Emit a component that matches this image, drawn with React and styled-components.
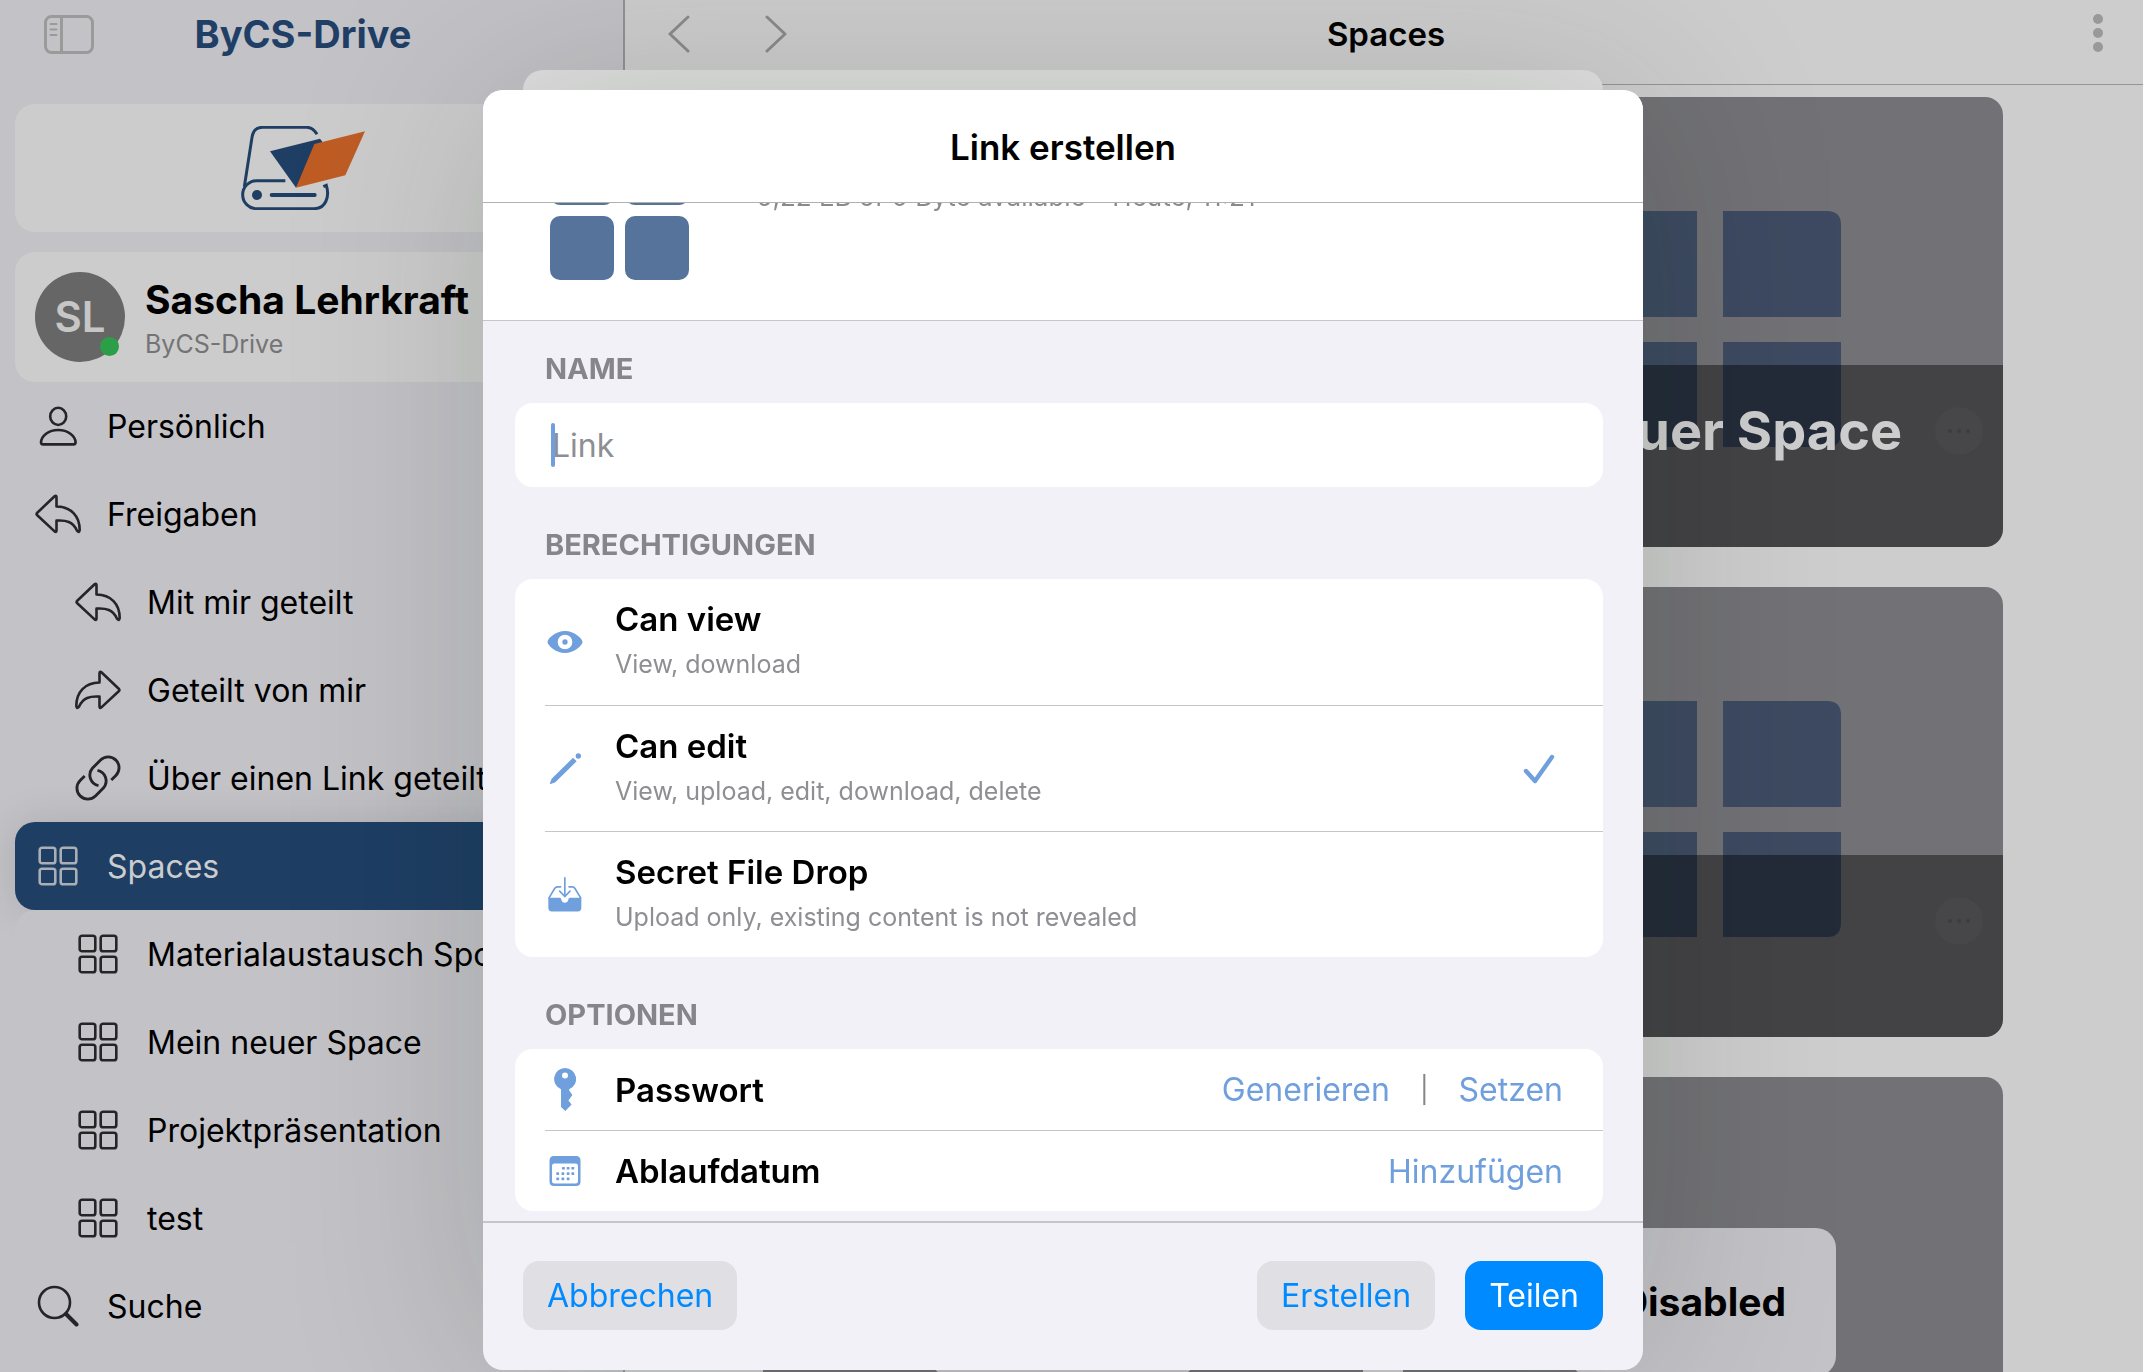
import React, { useState } from 'react';
import styled, { createGlobalStyle, css } from 'styled-components';

const GlobalStyle = createGlobalStyle`
  * {
    box-sizing: border-box;
  }

  body {
    margin: 0;
    overflow: hidden;
    background: #cdcdcd;
    color: #000;
    font-family: Inter, "Liberation Sans", sans-serif;
    font-size: 32px;
  }

  button, input {
    font: inherit;
  }

  button {
    border: 0;
    padding: 0;
    background: none;
    cursor: pointer;
  }
`;

const Page = styled.div`
  display: flex;
  height: 100vh;
  overflow: hidden;
`;

/* ---------- sidebar ---------- */

const Sidebar = styled.aside`
  flex: 0 0 625px;
  padding: 0 32px 0 15px;
  border-right: 2px solid #929393;
  background: #c3c2c7;
`;

const SidebarHeader = styled.header`
  display: grid;
  grid-template-columns: 50px 1fr 50px;
  align-items: center;
  height: 68px;
  margin: 0 29px 36px;
  color: #999a9a;
`;

const SidebarTitle = styled.h2`
  margin: 0;
  text-align: center;
  font-size: 38px;
  font-weight: 700;
  color: #1f3f66;
`;

const SidebarCard = styled.div`
  display: flex;
  align-items: center;
  border-radius: 20px;
  background: #cccccc;
`;

const LogoCard = styled(SidebarCard)`
  justify-content: center;
  height: 128px;
  margin-bottom: 20px;
`;

const AccountCard = styled(SidebarCard)`
  gap: 20px;
  height: 130px;
  padding: 0 20px;
`;

const Avatar = styled.div`
  position: relative;
  flex: none;
  width: 90px;
  height: 90px;
  border-radius: 50%;
  background: #666;
  color: #c6c6c6;
  font-size: 42px;
  font-weight: 600;
  line-height: 90px;
  text-align: center;
`;

const OnlineDot = styled.span`
  position: absolute;
  right: 6px;
  bottom: 6px;
  width: 19px;
  height: 19px;
  border-radius: 50%;
  background: #2b9f47;
`;

const AccountText = styled.div`
  padding-top: 2px;
`;

const AccountName = styled.div`
  font-size: 39px;
  font-weight: 700;
  line-height: 52px;
  white-space: nowrap;
`;

const AccountHost = styled.div`
  font-size: 25px;
  line-height: 36px;
  color: #747476;
`;

const NavItem = styled.a`
  display: flex;
  align-items: center;
  gap: 24px;
  height: 88px;
  padding-left: ${(props) => (props.$nested ? 58 : 18)}px;
  border-radius: 20px;
  background: #c3c2c7;
  color: #000;
  text-decoration: none;
  white-space: nowrap;

  svg {
    color: #252527;
  }

  ${(props) => props.$active && css`
    background: #1e3e64;
    box-shadow: 0 0 40px rgba(0, 0, 0, 0.12);
    color: #cbccce;

    svg {
      color: #a9afb5;
    }
  `}
`;

const NavIcon = styled.span`
  display: flex;
  justify-content: center;
  flex: 0 0 50px;
`;

/* ---------- main area ---------- */

const Main = styled.main`
  flex: 1;
  min-width: 0;
`;

const Toolbar = styled.header`
  display: grid;
  grid-template-columns: 1fr auto 1fr;
  align-items: start;
  height: 85px;
  padding: 0 39px 0 43px;
  border-bottom: 1px solid #959595;
`;

const ToolbarGroup = styled.div`
  display: flex;
  align-items: center;
  justify-content: ${(props) => (props.$end ? 'flex-end' : 'flex-start')};
  gap: 75px;
  height: 68px;
`;

const IconButton = styled.button`
  display: flex;
  color: ${(props) => props.$color || '#8a8c89'};
`;

const ToolbarTitle = styled.h1`
  margin: 0;
  font-size: 33px;
  font-weight: 600;
  line-height: 68px;
`;

const SpaceGrid = styled.div`
  display: grid;
  grid-template-columns: 1fr 1fr;
  gap: 40px;
  padding: 12px 140px 0 138px;
`;

const SpaceCard = styled.article`
  position: relative;
  display: flex;
  align-items: center;
  justify-content: center;
  height: 450px;
  border-radius: 18px;
  overflow: hidden;
  background: #727176;
`;

const SpaceArt = styled.svg`
  margin: 14px 0 0 14px;
`;

const SpaceCaption = styled.div`
  position: absolute;
  inset: auto 0 0 0;
  display: flex;
  align-items: flex-start;
  justify-content: space-between;
  height: 182px;
  padding: 31px 20px 31px 24px;
  background: rgba(0, 0, 0, 0.41);
`;

const SpaceName = styled.h3`
  margin: 0;
  color: #cdcdcd;
  font-size: 54px;
  font-weight: 700;
  line-height: 70px;
  white-space: nowrap;
`;

const MoreButton = styled.button`
  display: flex;
  align-items: center;
  justify-content: center;
  width: 48px;
  height: 48px;
  margin-top: 11px;
  border-radius: 50%;
  background: #474749;
  color: #3d3d3f;
`;

const DisabledBadge = styled.div`
  position: absolute;
  padding: 50px;
  border-radius: 20px;
  background: #c3c2c7;
  font-size: 39px;
  font-weight: 700;
  line-height: 48px;
`;

/* ---------- dialog ---------- */

const Overlay = styled.div`
  position: fixed;
  inset: 0;
  display: flex;
  flex-direction: column;
  align-items: center;
  padding: 70px 17px 2px 0;
`;

const BackSheet = styled.div`
  flex: none;
  width: calc(100% - 80px);
  max-width: 1080px;
  height: 20px;
  border-radius: 20px 20px 0 0;
  background: #e0e0e0;
`;

const Dialog = styled.section`
  display: flex;
  flex: 1;
  flex-direction: column;
  width: 100%;
  max-width: 1160px;
  min-height: 0;
  border-radius: 20px;
  overflow: hidden;
  background: #f2f1f7;
  box-shadow: 0 0 200px rgba(10, 30, 0, 0.17);
`;

const DialogHeader = styled.header`
  flex: none;
  padding: 33px 0 31px;
  border-bottom: 1px solid #b1b1b3;
  background: #fff;
`;

const DialogTitle = styled.h2`
  margin: 0;
  text-align: center;
  font-size: 35px;
  font-weight: 600;
  line-height: 48px;
`;

const DialogBody = styled.div`
  flex: 1;
  min-height: 0;
  overflow: hidden;
`;

/* the item summary is scrolled halfway under the header */
const ItemSummary = styled.div`
  display: flex;
  align-items: flex-end;
  height: 118px;
  padding: 0 67px 40px;
  overflow: hidden;
  border-bottom: 1px solid #c6c6c9;
  background: #fff;
`;

const ItemRow = styled.div`
  display: flex;
  align-items: flex-start;
  gap: 68px;
`;

const ItemMeta = styled.div`
  padding-top: 40px;
  color: #8a8a8e;
  font-size: 26px;
  line-height: 32px;
`;

const Group = styled.fieldset`
  min-width: 0;
  margin: 0 40px 0 32px;
  padding: 0;
  border: 0;
`;

const GroupLabel = styled.legend`
  display: block;
  padding: ${(props) => (props.$first ? 30 : 40)}px 0 16px 30px;
  color: #86858b;
  font-size: 29px;
  font-weight: 700;
  line-height: 36px;
  text-transform: uppercase;
`;

const GroupCard = styled.div`
  border-radius: 18px;
  overflow: hidden;
  background: #fff;
`;

const NameInput = styled.input`
  display: block;
  width: 100%;
  height: 84px;
  padding: 0 37px;
  border: 0;
  outline: 0;
  border-radius: 18px;
  background: #fff;
  caret-color: transparent;

  &::placeholder {
    color: #8e8e93;
    opacity: 1;
  }
`;

const NameField = styled.div`
  position: relative;
`;

const Caret = styled.span`
  position: absolute;
  top: 20px;
  left: 36px;
  width: 4px;
  height: 44px;
  border-radius: 2px;
  background: #6f9fdc;
`;

const rowStyle = css`
  display: flex;
  align-items: center;
  gap: 30px;
  margin-left: 30px;
  padding-right: 40px;

  & + & {
    border-top: 1px solid #c6c6c8;
  }
`;

const PermissionRow = styled.label`
  ${rowStyle}
  height: 126px;
  cursor: pointer;
`;

const OptionRow = styled.div`
  ${rowStyle}
  height: 81px;
`;

const RowIcon = styled.span`
  display: flex;
  justify-content: center;
  flex: 0 0 40px;
  color: #6f9fdc;
`;

const HiddenRadio = styled.input`
  position: absolute;
  opacity: 0;
`;

const RowText = styled.span`
  display: flex;
  flex: 1;
  flex-direction: column;
  padding-bottom: 2px;
`;

const RowTitle = styled.span`
  flex: 1;
  font-size: 33px;
  font-weight: 600;
  line-height: 46px;
`;

const RowHint = styled.span`
  color: #8e8e93;
  font-size: 25px;
  line-height: 44px;
`;

const CheckMark = styled.span`
  display: flex;
  padding-right: 8px;
  color: #6f9fdc;
`;

const Actions = styled.div`
  display: flex;
  align-items: center;
  gap: 30px;
`;

const Divider = styled.span`
  color: #85858a;
  font-size: 26px;
`;

const LinkButton = styled.button`
  color: #6f9fdc;
`;

const DialogFooter = styled.footer`
  display: flex;
  flex: none;
  gap: 30px;
  padding: 38px 40px 40px;
  border-top: 2px solid #c6c6ca;
`;

const FooterButton = styled.button`
  height: 69px;
  padding: 0 24px;
  border-radius: 16px;
  background: ${(props) => (props.$primary ? '#008aff' : '#dfdfe4')};
  color: ${(props) => (props.$primary ? '#fff' : '#008aff')};

  &:first-child {
    margin-right: auto;
  }
`;

/* ---------- icons ---------- */

function GridIcon() {
  return (
    <svg width="40" height="40" viewBox="0 0 40 40" fill="none" stroke="currentColor" strokeWidth="2.6">
      <rect x="1.7" y="1.7" width="15.6" height="15.6" rx="2.4" />
      <rect x="22.7" y="1.7" width="15.6" height="15.6" rx="2.4" />
      <rect x="1.7" y="22.7" width="15.6" height="15.6" rx="2.4" />
      <rect x="22.7" y="22.7" width="15.6" height="15.6" rx="2.4" />
    </svg>
  );
}

function PersonIcon() {
  return (
    <svg width="38" height="40" viewBox="0 0 38 40" fill="none" stroke="currentColor" strokeWidth="2.6">
      <ellipse cx="19.2" cy="10.4" rx="8" ry="8.6" />
      <path d="M4 38.4 H34.6 Q36.6 38.4 36.6 36.3 C36.2 29.8 29 24 19.2 24 C9.4 24 2.4 29.8 2 36.3 Q2 38.4 4 38.4 Z" />
    </svg>
  );
}

function ShareArrowIcon({ flipped }) {
  return (
    <svg width="46" height="40" viewBox="0 0 46 40" fill="none" stroke="currentColor" strokeWidth="2.6" strokeLinejoin="round">
      <path
        transform={flipped ? 'translate(46 0) scale(-1 1)' : undefined}
        d="M19.6 2.3 L2 19 Q1.2 20 2 21 L19.6 37.4 Q21.5 38.6 21.5 36.4 V26.6 C31 26 38 27.4 42 36.7 Q44.4 39.4 44.7 36 C44.7 22 36 12.8 21.5 12.5 V3.4 Q21.5 1 19.6 2.3 Z"
      />
    </svg>
  );
}

function LinkIcon() {
  return (
    <svg width="46" height="46" viewBox="0 0 45 45" fill="none" stroke="currentColor" strokeWidth="2.8">
      <path d="M35.5 24.5 L40 20 A10.5 10.5 0 0 0 25 5 L17 13 A10.5 10.5 0 0 0 23 30" />
      <path d="M9.5 20.5 L5 25 A10.5 10.5 0 0 0 20 40 L28 32 A10.5 10.5 0 0 0 22 15" />
    </svg>
  );
}

function SearchIcon() {
  return (
    <svg width="42" height="42" viewBox="0 0 42 42" fill="none" stroke="currentColor" strokeLinecap="round">
      <circle cx="17.5" cy="17.5" r="15.5" strokeWidth="2.6" />
      <path d="M29 29 L39.5 39.5" strokeWidth="4" />
    </svg>
  );
}

function SidebarIcon() {
  return (
    <svg width="50" height="40" viewBox="0 0 50 40" fill="none" stroke="currentColor" strokeWidth="3">
      <rect x="1.5" y="2.5" width="47" height="36" rx="6" />
      <path d="M17.5 3 V38" />
      <path d="M6.5 10 H12.5 M6.5 15.5 H12.5 M6.5 21 H12.5" strokeWidth="2" strokeLinecap="round" />
    </svg>
  );
}

function ChevronIcon({ right }) {
  return (
    <svg width="22" height="38" viewBox="0 0 22 38" fill="none" stroke="currentColor" strokeWidth="3" strokeLinecap="round" strokeLinejoin="round">
      <path d={right ? 'M2 2 L20 19 L2 36' : 'M20 2 L2 19 L20 36'} />
    </svg>
  );
}

function DriveLogo() {
  return (
    <svg width="124" height="84" viewBox="723 378 372 252" fill="none" stroke="#1e3e64" strokeWidth="9">
      <path d="M951 403 Q938 382 920 382 H788 Q760 382 756 412 L733 560" />
      <path d="M856 542 H770 A42 42 0 0 0 770 626 H942 C976 626 990 592 979 556 L970 560" />
      <path d="M815 585 H944" strokeWidth="12" strokeLinecap="round" />
      <circle cx="771" cy="585" r="15" fill="#1e3e64" stroke="none" />
      <path d="M810 454 L960 416 L967 425 L888 563 Z" fill="#1e3e64" stroke="none" />
      <path d="M943 432 L1095 394 L1036 526 L888 563 Z" fill="#be5c24" stroke="none" />
    </svg>
  );
}

function EyeIcon() {
  return (
    <svg width="36" height="22" viewBox="144 93 105 66" fill="currentColor">
      <path fillRule="evenodd" d="M196.5 93 C224 93 249 116 249 126 C249 136 224 159 196.5 159 C169 159 144 136 144 126 C144 116 169 93 196.5 93 Z M196.5 104 A22 22 0 1 0 196.5 148 A22 22 0 1 0 196.5 104 Z" />
      <circle cx="196.5" cy="126" r="8" />
    </svg>
  );
}

function PencilIcon() {
  return (
    <svg width="31" height="31" viewBox="147 456 93 93" fill="currentColor">
      <path d="M216 470 L227 481 L163 544 L149 549 Q146 549 147 546 L152 533 Z" />
      <circle cx="232" cy="465" r="8" />
    </svg>
  );
}

function TrayIcon() {
  return (
    <svg width="34" height="35" viewBox="146 826 102 104" fill="none" stroke="currentColor" strokeWidth="5" strokeLinecap="round">
      <path d="M196.5 828 V882 M181 868 L196.5 884 L212 868" />
      <path d="M184 855 H174 Q169 855 166 860 L149 888 M209 855 H219 Q224 855 227 860 L244 888" />
      <path d="M147 888 H181 Q185 888 186 893 Q188 903 196.5 903 Q205 903 207 893 Q208 888 212 888 H246 V918 Q246 929 235 929 H158 Q147 929 147 918 Z" fill="currentColor" stroke="none" />
    </svg>
  );
}

function KeyIcon() {
  return (
    <svg width="22" height="43" viewBox="0 0 22 43" fill="currentColor">
      <path fillRule="evenodd" d="M11 0 A11 11 0 0 1 15.2 21.2 V22.4 L18.4 27 L14.4 32.5 L17.6 36.5 L11.3 43 L7 39 V21.2 A11 11 0 0 1 11 0 Z M11 4.6 A3 3 0 1 0 11 10.6 A3 3 0 1 0 11 4.6 Z" />
    </svg>
  );
}

function CalendarIcon() {
  const dots = [[14, 12], [18.7, 12], [23.4, 12], [8.3, 17.3], [13.5, 17.3], [18.7, 17.3], [23.4, 17.3], [8.3, 22.6], [13.5, 22.6], [18.7, 22.6]];
  return (
    <svg width="32" height="30" viewBox="0 0 32 30" fill="currentColor">
      <path fillRule="evenodd" d="M5 0 H27 Q31.5 0 31.5 4.5 V25.5 Q31.5 30 27 30 H5 Q.5 30 .5 25.5 V4.5 Q.5 0 5 0 Z M5.5 7.5 Q3 7.5 3 10 V25 Q3 27.5 5.5 27.5 H26.5 Q29 27.5 29 25 V10 Q29 7.5 26.5 7.5 Z" />
      {dots.map(([x, y]) => (
        <rect key={`${x}-${y}`} x={x - 1} y={y - 1} width="2.8" height="2.6" rx="0.6" />
      ))}
    </svg>
  );
}

function CheckIcon() {
  return (
    <svg width="32" height="30" viewBox="0 0 32 30" fill="none" stroke="currentColor" strokeWidth="4.4" strokeLinecap="round" strokeLinejoin="round">
      <path d="M3 17 L12 27 L29 3" />
    </svg>
  );
}

/* ---------- data ---------- */

const navItems = [
  { label: 'Persönlich', icon: <PersonIcon /> },
  { label: 'Freigaben', icon: <ShareArrowIcon /> },
  { label: 'Mit mir geteilt', icon: <ShareArrowIcon />, nested: true },
  { label: 'Geteilt von mir', icon: <ShareArrowIcon flipped />, nested: true },
  { label: 'Über einen Link geteilt', icon: <LinkIcon />, nested: true },
  { label: 'Spaces', icon: <GridIcon />, active: true },
  { label: 'Materialaustausch Sport', icon: <GridIcon />, nested: true },
  { label: 'Mein neuer Space', icon: <GridIcon />, nested: true },
  { label: 'Projektpräsentation', icon: <GridIcon />, nested: true },
  { label: 'test', icon: <GridIcon />, nested: true },
  { label: 'Suche', icon: <SearchIcon /> },
];

const spaces = [
  { id: 1, name: 'Material' },
  { id: 2, name: 'Mein neuer Space' },
  { id: 3, name: 'Projekt' },
  { id: 4, name: 'test' },
  { id: 5, disabled: true },
  { id: 6, disabled: true },
];

const permissions = [
  { id: 'view', title: 'Can view', hint: 'View, download', icon: <EyeIcon /> },
  { id: 'edit', title: 'Can edit', hint: 'View, upload, edit, download, delete', icon: <PencilIcon /> },
  { id: 'drop', title: 'Secret File Drop', hint: 'Upload only, existing content is not revealed', icon: <TrayIcon /> },
];

function Space({ space }) {
  return (
    <SpaceCard>
      {!space.disabled && (
        <SpaceArt width="262" height="236" viewBox="0 0 262 236" fill="#3d4a61">
          <path d="M14 0 H118 V106 H0 V14 Q0 0 14 0 Z" />
          <path d="M144 0 H248 Q262 0 262 14 V106 H144 Z" />
          <path d="M0 131 H118 V236 H14 Q0 236 0 222 Z" />
          <path d="M144 131 H262 V222 Q262 236 248 236 H144 Z" />
        </SpaceArt>
      )}
      {space.disabled ? (
        <DisabledBadge>Disabled</DisabledBadge>
      ) : (
        <SpaceCaption>
          <SpaceName>{space.name}</SpaceName>
          <MoreButton aria-label="Mehr">
            <svg width="24" height="6" viewBox="0 0 24 6" fill="currentColor">
              <circle cx="3" cy="3" r="2" />
              <circle cx="12" cy="3" r="2" />
              <circle cx="21" cy="3" r="2" />
            </svg>
          </MoreButton>
        </SpaceCaption>
      )}
    </SpaceCard>
  );
}

function LinkDialog() {
  const [permission, setPermission] = useState('edit');
  const [name, setName] = useState('');

  return (
    <Dialog role="dialog" aria-labelledby="dialog-title">
      <DialogHeader>
        <DialogTitle id="dialog-title">Link erstellen</DialogTitle>
      </DialogHeader>
      <DialogBody>
        <ItemSummary>
          <ItemRow>
            <svg width="139" height="139" viewBox="0 0 139 139" fill="#56739b">
              <rect width="64" height="64" rx="10" />
              <rect x="75" width="64" height="64" rx="10" />
              <rect y="75" width="64" height="64" rx="10" />
              <rect x="75" y="75" width="64" height="64" rx="10" />
            </svg>
            <ItemMeta>9,22 EB of 0 Byte available - Heute, 11:21</ItemMeta>
          </ItemRow>
        </ItemSummary>

        <Group>
          <GroupLabel as="label" htmlFor="link-name" $first>Name</GroupLabel>
          <NameField>
            <NameInput id="link-name" placeholder="Link" value={name} onChange={(e) => setName(e.target.value)} />
            <Caret />
          </NameField>
        </Group>

        <Group>
          <GroupLabel>Berechtigungen</GroupLabel>
          <GroupCard>
            {permissions.map((item) => (
              <PermissionRow key={item.id}>
                <HiddenRadio
                  type="radio"
                  name="permission"
                  checked={permission === item.id}
                  onChange={() => setPermission(item.id)}
                />
                <RowIcon>{item.icon}</RowIcon>
                <RowText>
                  <RowTitle>{item.title}</RowTitle>
                  <RowHint>{item.hint}</RowHint>
                </RowText>
                {permission === item.id && <CheckMark><CheckIcon /></CheckMark>}
              </PermissionRow>
            ))}
          </GroupCard>
        </Group>

        <Group>
          <GroupLabel>Optionen</GroupLabel>
          <GroupCard>
            <OptionRow>
              <RowIcon><KeyIcon /></RowIcon>
              <RowTitle>Passwort</RowTitle>
              <Actions>
                <LinkButton>Generieren</LinkButton>
                <Divider>|</Divider>
                <LinkButton>Setzen</LinkButton>
              </Actions>
            </OptionRow>
            <OptionRow>
              <RowIcon><CalendarIcon /></RowIcon>
              <RowTitle>Ablaufdatum</RowTitle>
              <LinkButton>Hinzufügen</LinkButton>
            </OptionRow>
          </GroupCard>
        </Group>
      </DialogBody>
      <DialogFooter>
        <FooterButton>Abbrechen</FooterButton>
        <FooterButton>Erstellen</FooterButton>
        <FooterButton $primary>Teilen</FooterButton>
      </DialogFooter>
    </Dialog>
  );
}

function App() {
  return (
    <>
      <GlobalStyle />
      <Page>
        <Sidebar>
          <SidebarHeader>
            <IconButton $color="#999a9a" aria-label="Seitenleiste"><SidebarIcon /></IconButton>
            <SidebarTitle>ByCS-Drive</SidebarTitle>
          </SidebarHeader>
          <LogoCard><DriveLogo /></LogoCard>
          <AccountCard>
            <Avatar>
              SL
              <OnlineDot />
            </Avatar>
            <AccountText>
              <AccountName>Sascha Lehrkraft</AccountName>
              <AccountHost>ByCS-Drive</AccountHost>
            </AccountText>
          </AccountCard>
          <nav>
            {navItems.map((item) => (
              <NavItem key={item.label} href="#" $nested={item.nested} $active={item.active}>
                <NavIcon>{item.icon}</NavIcon>
                {item.label}
              </NavItem>
            ))}
          </nav>
        </Sidebar>

        <Main>
          <Toolbar>
            <ToolbarGroup>
              <IconButton aria-label="Zurück"><ChevronIcon /></IconButton>
              <IconButton aria-label="Vorwärts"><ChevronIcon right /></IconButton>
            </ToolbarGroup>
            <ToolbarTitle>Spaces</ToolbarTitle>
            <ToolbarGroup $end>
              <IconButton $color="#999" aria-label="Menü">
                <svg width="12" height="40" viewBox="0 0 12 40" fill="currentColor">
                  <circle cx="6" cy="5" r="5" />
                  <circle cx="6" cy="19" r="5" />
                  <circle cx="6" cy="33" r="5" />
                </svg>
              </IconButton>
            </ToolbarGroup>
          </Toolbar>
          <SpaceGrid>
            {spaces.map((space) => <Space key={space.id} space={space} />)}
          </SpaceGrid>
        </Main>
      </Page>

      <Overlay>
        <BackSheet />
        <LinkDialog />
      </Overlay>
    </>
  );
}

export default App;
